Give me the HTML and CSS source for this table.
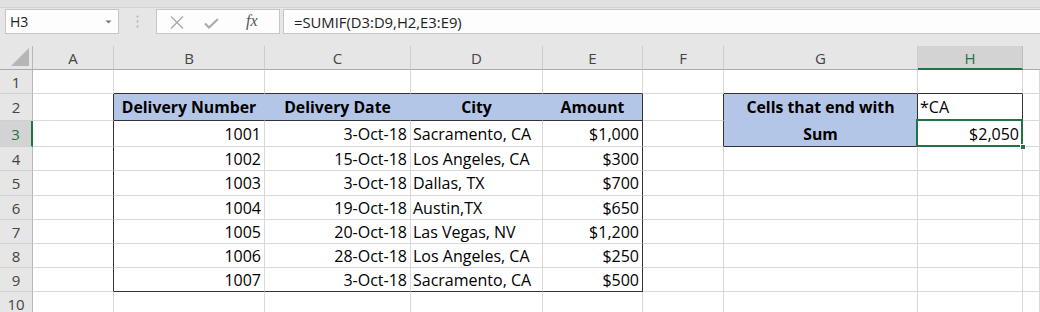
FILE: index.html
```html
<!DOCTYPE html>
<html>
<head>
<meta charset="utf-8">
<link rel="stylesheet" href="styles.css">
</head>
<body>
<div class="app">
  <div class="topband"></div>
  <div class="toolbar">
    <div class="namebox">
      <span>H3</span>
      <svg class="dd" width="7" height="4" viewBox="0 0 7 4"><path d="M0.5 0.5 L3.5 3.5 L6.5 0.5 Z" fill="#777"/></svg>
    </div>
    <div class="grip">
      <svg width="3" height="13" viewBox="0 0 3 13"><circle cx="1.5" cy="1.5" r="1" fill="#b0b0b0"/><circle cx="1.5" cy="6.5" r="1" fill="#b0b0b0"/><circle cx="1.5" cy="11.5" r="1" fill="#b0b0b0"/></svg>
    </div>
    <div class="fxbox">
      <svg class="ico-x" width="14" height="13" viewBox="0 0 14 13"><path d="M1 0.5 L13 12.5 M13 0.5 L1 12.5" stroke="#a9a9a9" stroke-width="1.3" fill="none"/></svg>
      <svg class="ico-ok" width="15" height="11" viewBox="0 0 15 11"><path d="M1 5.5 L5 9.5 L14 1" stroke="#a9a9a9" stroke-width="2" fill="none"/></svg>
      <span class="fx">fx</span>
    </div>
    <div class="formula">=SUMIF(D3:D9,H2,E3:E9)</div>
  </div>

  <div class="sheet">
    <!-- header row -->
    <div class="corner"><svg width="18" height="18" viewBox="0 0 18 18"><path d="M18 0 L18 18 L0 18 Z" fill="#b6b6b6"/></svg></div>
    <div class="ch">A</div>
    <div class="ch">B</div>
    <div class="ch">C</div>
    <div class="ch">D</div>
    <div class="ch">E</div>
    <div class="ch">F</div>
    <div class="ch">G</div>
    <div class="ch sel">H</div>
    <div class="ch last"></div>

    <!-- row 1 -->
    <div class="rh">1</div>
    <div class="c"></div>
    <div class="c bb"></div>
    <div class="c bb"></div>
    <div class="c bb"></div>
    <div class="c bb"></div>
    <div class="c"></div>
    <div class="c bb"></div>
    <div class="c bb"></div>
    <div class="c"></div>

    <!-- row 2 -->
    <div class="rh">2</div>
    <div class="c br"></div>
    <div class="c hd bb">Delivery Number</div>
    <div class="c hd bb">Delivery Date</div>
    <div class="c hd bb">City</div>
    <div class="c hd bb br">Amount</div>
    <div class="c br"></div>
    <div class="c hd br nb">Cells that end with</div>
    <div class="c br bb l">*CA</div>
    <div class="c"></div>

    <!-- row 3 -->
    <div class="rh sel">3</div>
    <div class="c br"></div>
    <div class="c r">1001</div>
    <div class="c r">3-Oct-18</div>
    <div class="c l">Sacramento, CA</div>
    <div class="c r br">$1,000</div>
    <div class="c br"></div>
    <div class="c hd br bb">Sum</div>
    <div class="c r active">$2,050<span class="handle"></span></div>
    <div class="c"></div>

    <!-- row 4 -->
    <div class="rh">4</div>
    <div class="c br"></div>
    <div class="c r">1002</div>
    <div class="c r">15-Oct-18</div>
    <div class="c l">Los Angeles, CA</div>
    <div class="c r br">$300</div>
    <div class="c"></div>
    <div class="c"></div>
    <div class="c"></div>
    <div class="c"></div>

    <!-- row 5 -->
    <div class="rh">5</div>
    <div class="c br"></div>
    <div class="c r">1003</div>
    <div class="c r">3-Oct-18</div>
    <div class="c l">Dallas, TX</div>
    <div class="c r br">$700</div>
    <div class="c"></div>
    <div class="c"></div>
    <div class="c"></div>
    <div class="c"></div>

    <!-- row 6 -->
    <div class="rh">6</div>
    <div class="c br"></div>
    <div class="c r">1004</div>
    <div class="c r">19-Oct-18</div>
    <div class="c l">Austin,TX</div>
    <div class="c r br">$650</div>
    <div class="c"></div>
    <div class="c"></div>
    <div class="c"></div>
    <div class="c"></div>

    <!-- row 7 -->
    <div class="rh">7</div>
    <div class="c br"></div>
    <div class="c r">1005</div>
    <div class="c r">20-Oct-18</div>
    <div class="c l">Las Vegas, NV</div>
    <div class="c r br">$1,200</div>
    <div class="c"></div>
    <div class="c"></div>
    <div class="c"></div>
    <div class="c"></div>

    <!-- row 8 -->
    <div class="rh">8</div>
    <div class="c br"></div>
    <div class="c r">1006</div>
    <div class="c r">28-Oct-18</div>
    <div class="c l">Los Angeles, CA</div>
    <div class="c r br">$250</div>
    <div class="c"></div>
    <div class="c"></div>
    <div class="c"></div>
    <div class="c"></div>

    <!-- row 9 -->
    <div class="rh">9</div>
    <div class="c br"></div>
    <div class="c r bb">1007</div>
    <div class="c r bb">3-Oct-18</div>
    <div class="c l bb">Sacramento, CA</div>
    <div class="c r br bb">$500</div>
    <div class="c"></div>
    <div class="c"></div>
    <div class="c"></div>
    <div class="c"></div>

    <!-- row 10 -->
    <div class="rh">10</div>
    <div class="c"></div>
    <div class="c"></div>
    <div class="c"></div>
    <div class="c"></div>
    <div class="c"></div>
    <div class="c"></div>
    <div class="c"></div>
    <div class="c"></div>
    <div class="c"></div>
  </div>
</div>
</body>
</html>
```

FILE: styles.css
```css
* { box-sizing: border-box; }
html, body {
  margin: 0;
  padding: 0;
  width: 1040px;
  height: 312px;
  overflow: hidden;
  background: #ffffff;
}
.app {
  width: 1040px;
  height: 312px;
  overflow: hidden;
  display: flex;
  flex-direction: column;
  font-family: "Open Sans", "Noto Sans", sans-serif;
}
.topband {
  height: 8px;
  background: #e1e1e1;
  border-bottom: 1px solid #d3d3d3;
  flex: none;
}
.toolbar {
  height: 38px;
  flex: none;
  background: #e6e6e6;
  display: flex;
  align-items: flex-start;
  padding: 1px 0 0 5px;
}
.namebox {
  width: 114px;
  height: 25px;
  background: #fdfdfd;
  border: 1px solid #c6c6c6;
  display: flex;
  align-items: center;
  justify-content: space-between;
  padding: 0 6px 0 4px;
  font-size: 14px;
  color: #222;
}
.grip {
  width: 37px;
  height: 25px;
  display: flex;
  align-items: center;
  justify-content: center;
}
.fxbox {
  width: 124px;
  height: 25px;
  background: #fdfdfd;
  border: 1px solid #c6c6c6;
  display: flex;
  align-items: center;
  padding-left: 13px;
}
.ico-x { margin-right: 20px; margin-top: 1px; }
.ico-ok { margin-right: 27px; margin-top: 3px; }
.fx {
  font-family: "Liberation Serif", "DejaVu Serif", serif;
  font-style: italic;
  font-size: 16px;
  color: #555;
  margin-top: -2px;
}
.formula {
  flex: 1;
  height: 25px;
  margin-left: 3px;
  background: #fdfdfd;
  border: 1px solid #c6c6c6;
  border-right: none;
  display: flex;
  align-items: center;
  padding-left: 10px;
  font-size: 14.8px;
  color: #222;
}

.sheet {
  flex: 1;
  display: grid;
  grid-template-columns: 33px 81px 151px 146px 132px 100px 81px 194px 105px 1fr;
  grid-template-rows: 24px 24px 27px 26px 24px 25px 24px 24px 24px 24px 24px;
  background: #fff;
}
.corner {
  background: #e6e6e6;
  border-right: 1px solid #b8b8b8;
  border-bottom: 1px solid #ababab;
  display: flex;
  align-items: flex-end;
  justify-content: flex-end;
  padding: 0 3px 3px 0;
}
.ch {
  background: #e6e6e6;
  border-bottom: 1px solid #ababab;
  border-right: 1px solid #cdcdcd;
  display: flex;
  align-items: center;
  justify-content: center;
  font-size: 15px;
  color: #444;
  padding-top: 1px;
}
.ch.last { border-right: none; }
.ch.sel {
  background: #d3d3d3;
  color: #217346;
  border-bottom: 2px solid #217346;
  border-right-color: #bdbdbd;
}
.rh {
  background: #e6e6e6;
  border-right: 1px solid #b8b8b8;
  border-bottom: 1px solid #d0d0d0;
  display: flex;
  align-items: center;
  justify-content: center;
  font-size: 15px;
  color: #444;
}
.rh.sel {
  background: #d3d3d3;
  color: #217346;
  border-right: 2px solid #217346;
}

.c {
  border-right: 1px solid #d9d9d9;
  border-bottom: 1px solid #d9d9d9;
  display: flex;
  align-items: center;
  font-family: "Open Sans", "Noto Sans", sans-serif;
  font-size: 16px;
  color: #000;
  white-space: nowrap;
  position: relative;
}
.r { justify-content: flex-end; padding-right: 3px; }
.l { justify-content: flex-start; padding-left: 2px; }
.hd {
  background: #b4c6e7;
  font-weight: bold;
  justify-content: center;
  border-right-color: #b4c6e7;
  font-size: 15.8px;
}
.nb { border-bottom-color: #b4c6e7; }
.br { border-right-color: #333; }
.bb { border-bottom-color: #333; }

.active::after {
  content: "";
  position: absolute;
  left: -2px;
  top: -2px;
  right: -1px;
  bottom: -1px;
  border: 2px solid #217346;
  pointer-events: none;
}
.handle {
  position: absolute;
  right: -4px;
  bottom: -4px;
  width: 6px;
  height: 6px;
  background: #217346;
  border: 1px solid #fff;
  z-index: 2;
}
```
